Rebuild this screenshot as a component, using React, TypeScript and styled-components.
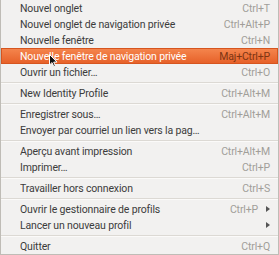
import React from "react";
import styled, { createGlobalStyle } from "styled-components";

const Global = createGlobalStyle`
  html, body {
    margin: 0;
    padding: 0;
    background: #f2f1f0;
  }
`;

const Menu = styled.ul`
  position: relative;
  list-style: none;
  margin: 0;
  padding: 0;
  width: 279px;
  height: 255px;
  box-sizing: border-box;
  background: #f2f1f0;
  border: 1px solid #bfbcb6;
  border-top: none;
  font-family: Roboto, "Open Sans", sans-serif;
  font-size: 10.5px;
  letter-spacing: -0.15px;
  color: #3c3c3c;
  overflow: hidden;
`;

const Item = styled.li<{ $active?: boolean }>`
  display: flex;
  align-items: center;
  height: 16px;
  padding: 0 8px 0 19px;
  box-sizing: border-box;
  white-space: nowrap;
  color: ${(p) => (p.$active ? "#ffffff" : "#3c3c3c")};
  background: ${(p) =>
    p.$active ? "linear-gradient(#f5874f, #e65f27)" : "transparent"};
  box-shadow: ${(p) => (p.$active ? "inset 0 0 0 1px #d6551f" : "none")};
`;

const Label = styled.span`
  flex: 1;
  overflow: hidden;
`;

const Shortcut = styled.span<{ $active?: boolean }>`
  margin-left: 10px;
  color: ${(p) => (p.$active ? "#7d3513" : "#a19e99")};
`;

const Arrow = styled.span`
  width: 12px;
  display: flex;
  justify-content: flex-end;
  &::after {
    content: "";
    border-left: 4px solid #555;
    border-top: 3px solid transparent;
    border-bottom: 3px solid transparent;
  }
`;

const Separator = styled.li`
  height: 5px;
  display: flex;
  flex-direction: column;
  justify-content: center;
  &::before {
    content: "";
    height: 1px;
    background: #dcd9d4;
  }
  &::after {
    content: "";
    height: 1px;
    background: #fbfaf9;
  }
`;

const Cursor = styled.svg`
  position: absolute;
  left: 48px;
  top: 54px;
`;

type Entry =
  | { sep: true }
  | { label: string; key?: string; sub?: boolean; active?: boolean };

const entries: Entry[] = [
  { label: "Nouvel onglet", key: "Ctrl+T" },
  { label: "Nouvel onglet de navigation privée", key: "Ctrl+Alt+P" },
  { label: "Nouvelle fenêtre", key: "Ctrl+N" },
  { label: "Nouvelle fenêtre de navigation privée", key: "Maj+Ctrl+P", active: true },
  { label: "Ouvrir un fichier…", key: "Ctrl+O" },
  { sep: true },
  { label: "New Identity Profile", key: "Ctrl+Alt+M" },
  { sep: true },
  { label: "Enregistrer sous…", key: "Ctrl+Alt+M" },
  { label: "Envoyer par courriel un lien vers la pag…" },
  { sep: true },
  { label: "Aperçu avant impression", key: "Ctrl+Alt+M" },
  { label: "Imprimer…", key: "Ctrl+P" },
  { sep: true },
  { label: "Travailler hors connexion", key: "Ctrl+S" },
  { sep: true },
  { label: "Ouvrir le gestionnaire de profils", key: "Ctrl+P", sub: true },
  { label: "Lancer un nouveau profil", sub: true },
  { sep: true },
  { label: "Quitter", key: "Ctrl+Q" },
];

export default function App() {
  return (
    <>
      <Global />
      <Menu>
        {entries.map((e, i) =>
          "sep" in e ? (
            <Separator key={i} />
          ) : (
            <Item key={i} $active={e.active}>
              <Label>{e.label}</Label>
              {e.key && <Shortcut $active={e.active}>{e.key}</Shortcut>}
              {e.sub && <Arrow />}
            </Item>
          )
        )}
        <Cursor width="9" height="14" viewBox="0 0 9 14">
          <path
            d="M0.5 0.5 L0.5 11 L3 8.6 L4.8 12.6 L6.4 11.9 L4.7 8.1 L8 8.1 Z"
            fill="#111"
            stroke="#fff"
            strokeWidth="1"
            strokeLinejoin="round"
          />
        </Cursor>
      </Menu>
    </>
  );
}
